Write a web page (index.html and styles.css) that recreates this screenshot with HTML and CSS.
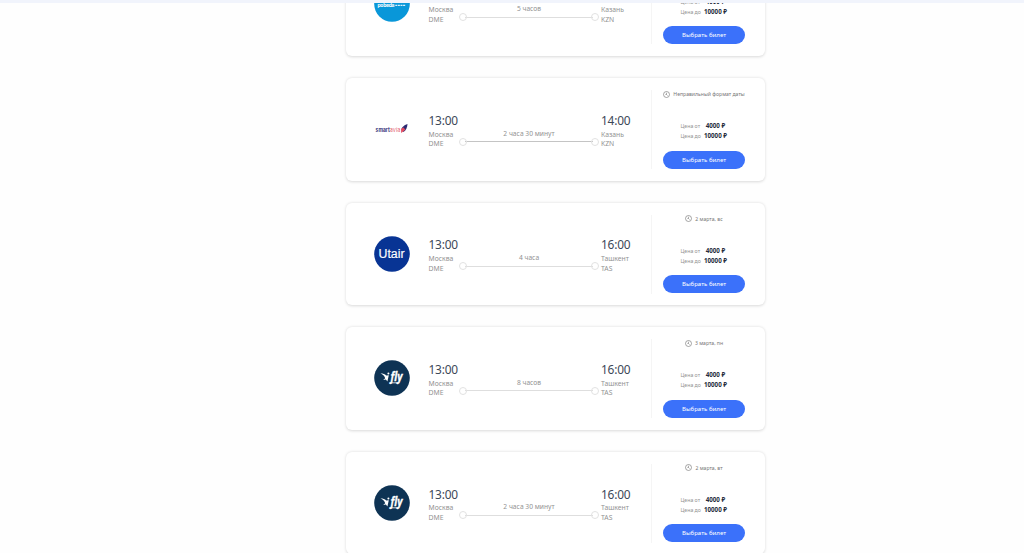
FILE: index.html
```html
<!DOCTYPE html>
<html lang="ru">
<head>
<meta charset="utf-8">
<title>Авиабилеты</title>
<link rel="stylesheet" href="styles.css">
</head>
<body>
<svg class="defs" width="0" height="0" aria-hidden="true">
  <symbol id="clock" viewBox="0 0 14 14">
    <circle cx="7" cy="7" r="6" fill="none" stroke="#777" stroke-width="1.3"/>
    <path d="M7 3.4V7l2 2M7 7H4.8" fill="none" stroke="#777" stroke-width="1.2"/>
  </symbol>
  <symbol id="ifly" viewBox="0 0 36 36">
    <circle cx="18" cy="18" r="17.800" fill="#0e3354"/>
    <path d="M6.500 13.600c2.600 0 4.300.5 5.700 1.800l2.600-.2-1.400 6.300-1.500-2-2.700.4 2-1.700c-.8-2.300-2.400-3.900-4.700-4.600z" fill="#fff"/>
    <circle cx="14.400" cy="13.500" r="1" fill="#fff"/>
    <text class="logo-fly" x="16.600" y="21.300" textLength="12" lengthAdjust="spacingAndGlyphs">fly</text>
    <path d="M16 22.800h8.500" stroke="#fff" stroke-width=".8"/>
  </symbol>
</svg>
<header class="topbar"></header>
<main class="viewport">
  <div class="list">
    <article class="card">
      <section class="flight">
        <svg class="logo" viewBox="0 0 36 36"><circle cx="18" cy="18" r="17.800" fill="#0997d9"/><text class="logo-pobeda" x="3.500" y="20.900" textLength="17">pobeda</text><path d="M21.300 19.300h10.500" stroke="#d8f0fb" stroke-width="1.300" stroke-dasharray="2 .6"/></svg>
        <div class="place from"><b class="time">13:00</b><span>Москва</span><span>DME</span></div>
        <div class="route"><span class="duration">5 часов</span><div class="line"></div></div>
        <div class="place"><b class="time">14:00</b><span>Казань</span><span>KZN</span></div>
      </section>
      <aside class="offer">
        <div class="date"><svg class="clock"><use href="#clock"/></svg><span>2 марта, вс</span></div>
        <dl class="prices"><dt>Цена от</dt><dd>4000 ₽</dd><dt>Цена до</dt><dd>10000 ₽</dd></dl>
        <button class="choose">Выбрать билет</button>
      </aside>
    </article>
    <article class="card">
      <section class="flight">
        <svg class="logo" viewBox="0 0 36 36"><text class="logo-smart" x="1.600" y="21.300" textLength="14.200" lengthAdjust="spacingAndGlyphs">smart</text><text class="logo-avia" x="15.800" y="21.300" textLength="10.600" lengthAdjust="spacingAndGlyphs">avia</text><path d="M27.500 18.500c.2-2.500 2.300-4.200 6-5.600-.2 3.200-1.200 6.200-4 8.200z" fill="#2d2a72"/><path d="M27 17.800l2.600-1.400 1.700 2.400-4.100 3.100z" fill="#e34b5f"/></svg>
        <div class="place from"><b class="time">13:00</b><span>Москва</span><span>DME</span></div>
        <div class="route"><span class="duration">2 часа 30 минут</span><div class="line strong"></div></div>
        <div class="place"><b class="time">14:00</b><span>Казань</span><span>KZN</span></div>
      </section>
      <aside class="offer">
        <div class="date"><svg class="clock"><use href="#clock"/></svg><span>Неправильный формат даты</span></div>
        <dl class="prices"><dt>Цена от</dt><dd>4000 ₽</dd><dt>Цена до</dt><dd>10000 ₽</dd></dl>
        <button class="choose">Выбрать билет</button>
      </aside>
    </article>
    <article class="card">
      <section class="flight">
        <svg class="logo" viewBox="0 0 36 36"><circle cx="18" cy="18" r="17.800" fill="#083494"/><text class="logo-utair" x="4.500" y="22.200" textLength="26" lengthAdjust="spacingAndGlyphs">Utair</text></svg>
        <div class="place from"><b class="time">13:00</b><span>Москва</span><span>DME</span></div>
        <div class="route"><span class="duration">4 часа</span><div class="line"></div></div>
        <div class="place"><b class="time">16:00</b><span>Ташкент</span><span>TAS</span></div>
      </section>
      <aside class="offer">
        <div class="date"><svg class="clock"><use href="#clock"/></svg><span>2 марта, вс</span></div>
        <dl class="prices"><dt>Цена от</dt><dd>4000 ₽</dd><dt>Цена до</dt><dd>10000 ₽</dd></dl>
        <button class="choose">Выбрать билет</button>
      </aside>
    </article>
    <article class="card">
      <section class="flight">
        <svg class="logo"><use href="#ifly"/></svg>
        <div class="place from"><b class="time">13:00</b><span>Москва</span><span>DME</span></div>
        <div class="route"><span class="duration">8 часов</span><div class="line"></div></div>
        <div class="place"><b class="time">16:00</b><span>Ташкент</span><span>TAS</span></div>
      </section>
      <aside class="offer">
        <div class="date"><svg class="clock"><use href="#clock"/></svg><span>3 марта, пн</span></div>
        <dl class="prices"><dt>Цена от</dt><dd>4000 ₽</dd><dt>Цена до</dt><dd>10000 ₽</dd></dl>
        <button class="choose">Выбрать билет</button>
      </aside>
    </article>
    <article class="card">
      <section class="flight">
        <svg class="logo"><use href="#ifly"/></svg>
        <div class="place from"><b class="time">13:00</b><span>Москва</span><span>DME</span></div>
        <div class="route"><span class="duration">2 часа 30 минут</span><div class="line"></div></div>
        <div class="place"><b class="time">16:00</b><span>Ташкент</span><span>TAS</span></div>
      </section>
      <aside class="offer">
        <div class="date"><svg class="clock"><use href="#clock"/></svg><span>2 марта, вт</span></div>
        <dl class="prices"><dt>Цена от</dt><dd>4000 ₽</dd><dt>Цена до</dt><dd>10000 ₽</dd></dl>
        <button class="choose">Выбрать билет</button>
      </aside>
    </article>
  </div>
</main>
</body>
</html>
```
FILE: styles.css
```css
* { box-sizing: border-box; }
body {
  margin: 0;
  height: 553px;
  overflow: hidden;
  background: #fefefe;
  font-family: "Noto Sans", "Open Sans", sans-serif;
  color: #929292;
}
.defs { display: block; }
.topbar { height: 2.500px; background: #f1f4fc; }
.viewport { height: 550.500px; overflow: hidden; }
.list {
  display: flex;
  flex-direction: column;
  gap: 22.100px;
  width: 419px;
  margin: -49.100px 0 0 346px;
}
.card {
  display: grid;
  grid-template-columns: 304.500px 1fr;
  flex: none;
  height: 102.500px;
  border-radius: 6px;
  background: #fff;
  box-shadow: 0 .5px 3px rgba(0, 0, 0, .15);
}
.flight {
  display: grid;
  grid-template-columns: 36px 31px 160.500px 1fr;
  padding: 33px 0 0 27.500px;
}
.logo { width: 36px; height: 36px; }
.place {
  display: flex;
  flex-direction: column;
  padding-top: .8px;
  font-size: 6.800px;
  line-height: 9.500px;
  white-space: nowrap;
}
.from { margin-left: 19px; }
.time {
  margin-bottom: 1.800px;
  font-size: 11.900px;
  font-weight: 400;
  line-height: 16px;
  letter-spacing: -.2px;
  color: #3c4858;
}
.route {
  display: flex;
  flex-direction: column;
  align-items: center;
  justify-self: start;
  width: 140px;
  margin-left: 18.500px;
  padding-top: 17.600px;
}
.duration { font-size: 6.700px; line-height: 10px; white-space: nowrap; }
.line {
  display: flex;
  align-items: center;
  justify-content: space-between;
  width: 100%;
  height: 6px;
  background: linear-gradient(#dedede, #dedede) center / calc(100% - 12px) 1px no-repeat;
}
.line::before, .line::after {
  content: "";
  flex: none;
  width: 6px;
  height: 6px;
  border: 1px solid #e2e2e2;
  border-radius: 50%;
}
.strong { background-image: linear-gradient(#c4c4c4, #c4c4c4); }
.offer {
  display: flex;
  flex-direction: column;
  align-items: center;
  height: 79px;
  margin: 12px 14px 0 0;
  padding-left: 5.500px;
  border-left: 1px solid #f5f5f5;
}
.date {
  display: flex;
  align-items: center;
  gap: 3px;
  height: 9px;
  margin-top: -.5px;
  font-size: 5.100px;
  color: #777;
  white-space: nowrap;
}
.clock { width: 7px; height: 7px; }
.prices {
  display: grid;
  grid-template-columns: 20px 24px;
  column-gap: 3px;
  margin: 22.700px 0 9.500px;
  font-size: 5.200px;
  line-height: 10px;
  white-space: nowrap;
}
.prices dd { margin: 0; text-align: center; font-size: 6.200px; font-weight: 700; color: #252c3c; }
.choose {
  flex: none;
  width: 82.500px;
  height: 18px;
  padding: 0;
  border: 0;
  border-radius: 9px;
  background: #3b71fa;
  color: #fff;
  font: 400 6.100px/18px "Noto Sans", "Open Sans", sans-serif;
}
.logo-utair { font: 12px "Liberation Sans", sans-serif; fill: #fff; stroke: #fff; stroke-width: .15px; }
.logo-fly { font: italic 700 11.500px "Open Sans", sans-serif; fill: #fff; stroke: #fff; stroke-width: .3px; }
.logo-pobeda { font: 700 5px Inter, sans-serif; fill: #fff; }
.logo-smart { font: 700 5.500px Inter, sans-serif; fill: #3d3a7c; }
.logo-avia { font: 5.500px Inter, sans-serif; fill: #e56b78; }
```
